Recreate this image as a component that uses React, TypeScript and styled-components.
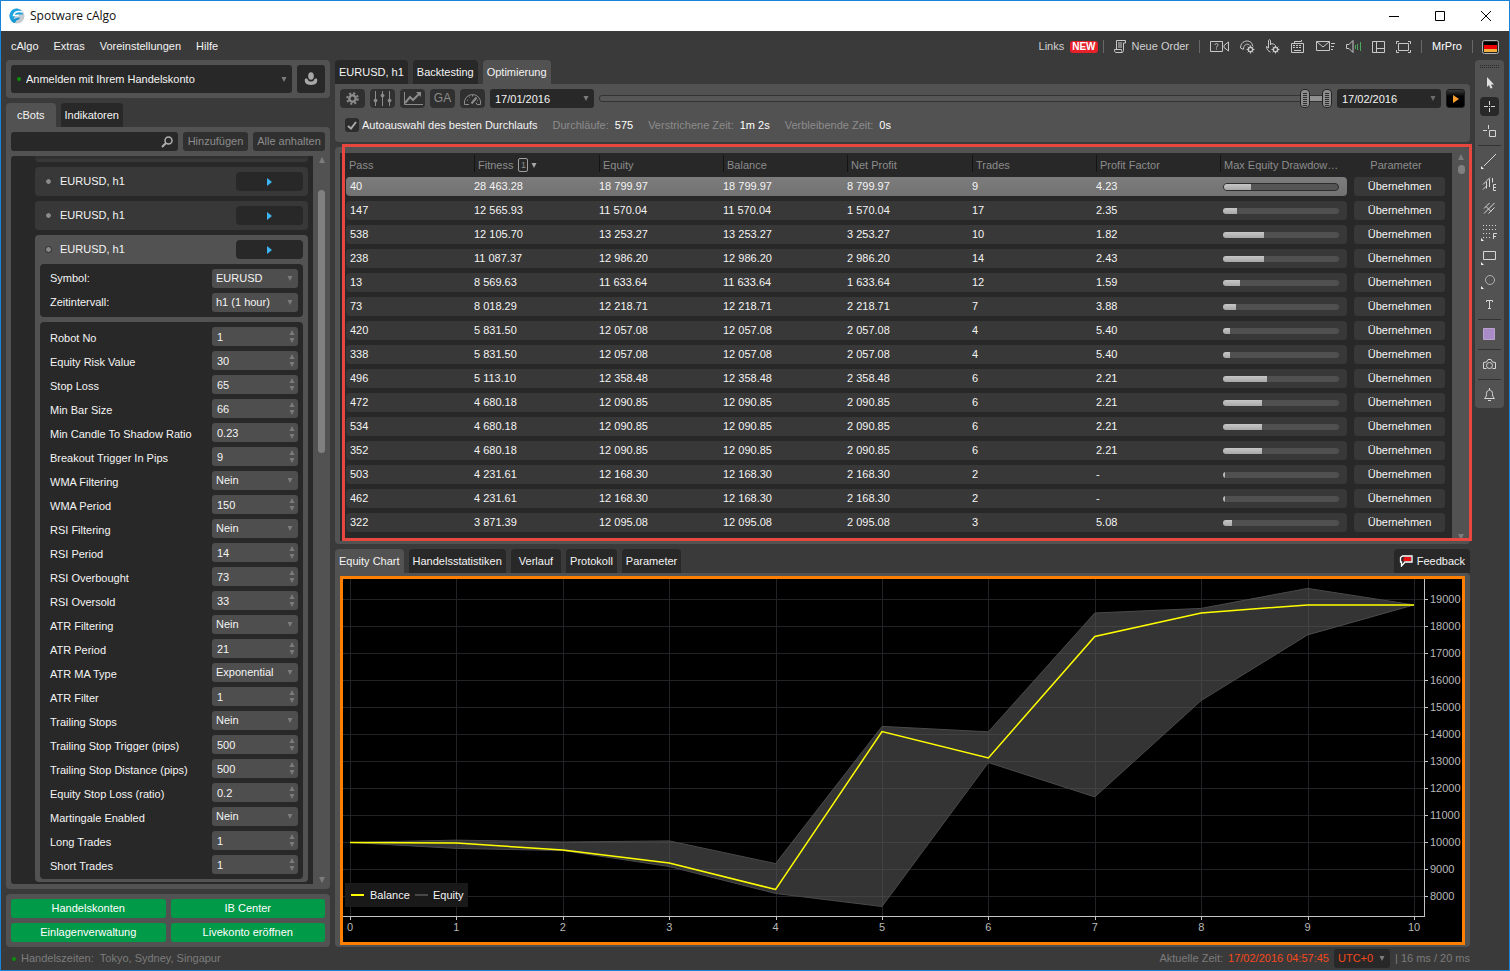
import React from "react";
import styled, { createGlobalStyle, css } from "styled-components";

const c = {
  edge: "#1883d7",
  base: "#3a3a3a",
  panel: "#525252",
  dark: "#282828",
  row: "#383838",
  field: "#4e4e4e",
  text: "#f4f4f4",
  muted: "#8c8c8c",
  icon: "#c8c8c8",
  green: "#009a49",
};

const GlobalStyle = createGlobalStyle`
  * { box-sizing: border-box; }
  body { margin: 0; background: ${c.base}; }
  body, button, input, select, table {
    font-family: "Liberation Sans", Arial, sans-serif;
    font-size: 11px;
    line-height: 13px;
    color: ${c.text};
  }
  button, input, select { border: 0; margin: 0; padding: 0; outline: 0; appearance: none; background: none; }
  svg { display: block; flex: none; }
`;

/* ---------- Window frame ---------- */

const Window = styled.div`
  display: flex;
  flex-direction: column;
  min-height: 100vh;
  min-width: 1200px;
  border: 1px solid ${c.edge};
  background: ${c.base};
`;

const TitleBar = styled.header`
  display: flex;
  align-items: center;
  height: 30px;
  padding-left: 8px;
  background: #fff;
`;

const Title = styled.h1`
  flex: 1;
  margin: 0 0 0 5px;
  font: 400 12px/16px "Open Sans", "Noto Sans", sans-serif;
  color: #111;
`;

const CaptionButton = styled.button`
  display: grid;
  place-items: center;
  width: 46px;
  height: 30px;
`;

const MenuBar = styled.nav`
  display: flex;
  align-items: center;
  height: 29px;
  padding: 2px 10px 0 10px;
`;

const Menu = styled.div`
  display: flex;
  flex: 1;
  gap: 15px;
`;

const MenuButton = styled.button<{ $strong?: boolean }>`
  color: ${(p) => (p.$strong ? "#fff" : c.text)};
`;

const Badge = styled.span`
  margin-left: 6px;
  padding: 0 2px;
  border-radius: 3px;
  background: #e8202a;
  color: #fff;
  font-weight: 700;
  font-size: 10px;
  line-height: 12px;
`;

const ToolLink = styled.a`
  display: flex;
  align-items: center;
  gap: 6px;
  color: #d0d0d0;
  text-decoration: none;
`;

const Divider = styled.span<{ $before?: number; $after?: number }>`
  width: 1px;
  height: 13px;
  margin-left: ${(p) => p.$before ?? 5}px;
  margin-right: ${(p) => p.$after ?? 10}px;
  background: #686868;
`;

const IconSet = styled.div`
  display: flex;
  align-items: center;
  gap: 11px;
`;

const IconButton = styled.button`
  display: block;
`;

/* ---------- Page structure ---------- */

const Body = styled.main`
  display: flex;
  flex: 1;
  align-items: stretch;
  gap: 5px;
  padding: 0 5px;
`;

const Column = styled.div<{ $width?: number }>`
  display: flex;
  flex-direction: column;
  gap: 5px;
  min-width: 0;
  ${(p) => (p.$width ? css`flex: none; width: ${p.$width}px;` : css`flex: 1;`)}
`;

const Section = styled.section<{ $grow?: boolean }>`
  display: flex;
  flex-direction: column;
  ${(p) => p.$grow && css`flex: 1;`}
`;

const Panel = styled.div`
  border-radius: 4px;
  background: ${c.panel};
`;

const TabStrip = styled.div`
  display: flex;
  gap: 5px;
  height: 24px;
`;

const Tab = styled.button<{ $active?: boolean; $pad?: number }>`
  padding: 0 ${(p) => p.$pad ?? 4}px;
  border-radius: 4px 4px 0 0;
  background: ${(p) => (p.$active ? c.panel : c.dark)};
  color: ${c.text};
`;

const FeedbackTab = styled(Tab)`
  display: flex;
  align-items: center;
  gap: 4px;
  margin-left: auto;
`;

/* ---------- Shared controls ---------- */

const Picker = styled.div<{ $tone?: string; $height?: number; $width?: number; $grow?: boolean }>`
  display: grid;
  align-items: center;
  height: ${(p) => p.$height ?? 19}px;
  border-radius: 3px;
  background: ${(p) => p.$tone ?? c.dark};
  ${(p) => (p.$grow ? css`flex: 1;` : css`flex: none; width: ${p.$width}px;`)}
  > * { grid-area: 1 / 1; }
  > svg { justify-self: end; margin-right: 5px; pointer-events: none; }
`;

const PickerSelect = styled.select<{ $pad?: number; $color?: string }>`
  width: 100%;
  height: 100%;
  padding-left: ${(p) => p.$pad ?? 4}px;
  color: ${(p) => p.$color ?? c.text};
`;

const PickerInput = styled.input`
  width: 100%;
  height: 100%;
  padding-left: 5px;
`;

const Spinner = styled.div`
  display: grid;
  align-items: center;
  flex: none;
  width: 86px;
  height: 19px;
  border-radius: 3px;
  background: ${c.field};
  > * { grid-area: 1 / 1; }
  > svg { justify-self: end; margin-right: 3px; pointer-events: none; }
`;

const Down = ({ color = "#7c7c7c" }: { color?: string }) => (
  <svg width="6" height="5" viewBox="0 0 6 5" aria-hidden="true">
    <path d="M.5 0h5L3 5z" fill={color} />
  </svg>
);

/* ---------- Left column ---------- */

const AccountBar = styled(Panel)`
  display: flex;
  gap: 5px;
  padding: 5px;
`;

const StatusDot = styled.span`
  width: 4px;
  height: 4px;
  margin-left: 6px;
  border-radius: 2px;
  background: #0a900a;
`;

const AccountButton = styled.button`
  display: grid;
  place-items: center;
  width: 28px;
  height: 28px;
  border-radius: 3px;
  background: ${c.dark};
`;

const BotPanel = styled(Panel)`
  display: flex;
  flex-direction: column;
  flex: 1;
  gap: 5px;
  padding: 5px 0 5px 5px;
  border-top-left-radius: 0;
`;

const SearchRow = styled.div`
  display: flex;
  gap: 5px;
  margin-right: 5px;
`;

const MutedButton = styled.button<{ $width: number }>`
  flex: none;
  width: ${(p) => p.$width}px;
  height: 19px;
  border-radius: 3px;
  background: #303030;
  color: ${c.muted};
`;

const ListRow = styled.div`
  display: flex;
  flex: 1;
`;

const BotList = styled.div`
  display: flex;
  flex: 1;
  flex-direction: column;
  gap: 5px;
  padding: 0 5px 2px 24px;
  border-radius: 3px 0 0 3px;
  background: ${c.dark};
`;

const BotStub = styled.div`
  height: 6px;
  border-radius: 0 0 4px 4px;
  border-top: 3px solid #303030;
  background: ${c.row};
`;

const BotItem = styled.div<{ $open?: boolean }>`
  display: flex;
  flex-direction: column;
  padding: ${(p) => (p.$open ? "0 5px 3px" : "0 5px")};
  border-radius: 4px;
  background: ${(p) => (p.$open ? c.panel : c.row)};
`;

const BotHeader = styled.div`
  display: flex;
  align-items: center;
  gap: 8px;
  height: 29px;
  padding-left: 5px;
`;

const BotDot = styled.span`
  width: 7px;
  height: 7px;
  border: 1px solid #2a2a2a;
  border-radius: 4px;
  background: #8a8a8a;
`;

const BotName = styled.span`
  flex: 1;
`;

const RunButton = styled.button`
  display: grid;
  place-items: center;
  width: 67px;
  height: 19px;
  border-radius: 4px;
  background: ${c.dark};
`;

const FieldBox = styled.div`
  display: flex;
  flex-direction: column;
  gap: 5px;
  padding: 5px 5px 5px 10px;
  border-radius: 4px;
  background: ${c.dark};
  & + & { margin-top: 5px; }
`;

const Field = styled.label`
  display: flex;
  align-items: center;
  height: 19px;
`;

const FieldName = styled.span<{ $drop?: boolean }>`
  flex: 1;
  padding-top: ${(p) => (p.$drop ? 4 : 0)}px;
`;

const Scrollbar = styled.div<{ $width: number }>`
  display: flex;
  flex: none;
  flex-direction: column;
  align-items: center;
  width: ${(p) => p.$width}px;
  background: ${c.panel};
  > :last-child { margin-top: auto; }
`;

const Thumb = styled.span<{ $gap: number; $height: number }>`
  width: 7px;
  height: ${(p) => p.$height}px;
  margin-top: ${(p) => p.$gap}px;
  border-radius: 4px;
  background: #808080;
`;

const ActionGrid = styled(Panel)`
  display: grid;
  grid-template-columns: 1fr 1fr;
  gap: 5px;
  padding: 5px;
`;

const ActionButton = styled.button`
  height: 19px;
  border-radius: 3px;
  background: ${c.green};
  color: #fff;
`;

/* ---------- Optimisation toolbar ---------- */

const OptPanel = styled(Panel)`
  height: 58px;
  padding: 5px;
  border-top-left-radius: 0;
`;

const OptRow = styled.div`
  display: flex;
  align-items: center;
  gap: 5px;
`;

const OptButton = styled.button`
  display: grid;
  place-items: center;
  width: 25px;
  height: 19px;
  border-radius: 4px;
  background: #303030;
`;

const MutedLabel = styled.span`
  color: ${c.muted};
  font-size: 12px;
`;

const PlayButton = styled.button`
  display: grid;
  place-items: center;
  width: 19px;
  height: 19px;
  border: 1px solid #1c1c1c;
  border-radius: 3px;
  background: linear-gradient(#3a3a3a, #000 40%);
`;

const RangeBox = styled.div`
  display: grid;
  flex: 1;
  align-items: center;
  height: 19px;
  > * { grid-area: 1 / 1; }
`;

const RangeTrack = styled.span`
  height: 7px;
  border: 1px solid #333;
  border-radius: 3px;
  background: #565656;
`;

const RangeFill = styled.span`
  justify-self: end;
  width: 24px;
  height: 5px;
  margin-right: 5px;
  background: #909090;
`;

const RangeInput = styled.input`
  width: 100%;
  height: 19px;
  pointer-events: none;
  &::-webkit-slider-thumb {
    appearance: none;
    pointer-events: auto;
    width: 10px;
    height: 19px;
    border: 1px solid #242424;
    border-radius: 4px;
    background:
      repeating-linear-gradient(transparent 0 1px, #2c2c2c 1px 2px) center / 4px 14px no-repeat,
      #8c8c8c;
  }
`;

const StatsRow = styled.div`
  display: flex;
  align-items: center;
  gap: 15px;
  margin-top: 10px;
  padding-left: 5px;
`;

const CheckLabel = styled.label`
  display: flex;
  align-items: center;
  gap: 3px;
`;

const CheckBox = styled.input`
  width: 14px;
  height: 14px;
  border-radius: 3px;
  background: #2c2c2c;
`;

const CheckWrap = styled.span`
  display: grid;
  place-items: center;
  > * { grid-area: 1 / 1; }
  > svg { pointer-events: none; }
`;

const Stat = styled.span`
  color: ${c.muted};
  b { margin-left: 6px; font-weight: 400; color: #fff; }
`;

/* ---------- Result table ---------- */

const TablePanel = styled(Panel)`
  position: relative;
  display: flex;
  padding: 6px 0 3px 5px;
`;

const Marker = styled.div`
  position: absolute;
  inset: -3px -2px 3px 7px;
  border: 3px solid #e8473f;
  pointer-events: none;
`;

const TableArea = styled.div`
  flex: 1;
  min-width: 0;
  padding: 0 0 4px 6px;
  overflow: hidden;
  background: ${c.dark};
`;

const Table = styled.table`
  width: 100%;
  margin-top: -3px;
  table-layout: fixed;
  border-spacing: 0 5px;
`;

const Th = styled.th`
  height: 17px;
  padding: 3px 0 0 3px;
  border-left: 1px solid #141414;
  color: ${c.muted};
  font-weight: 400;
  text-align: left;
  white-space: nowrap;
  overflow: hidden;
  &:first-child { border-left: 0; }
  &:last-child { padding-left: 0; padding-right: 7px; border-left: 0; text-align: center; }
`;

const SortHeader = styled.span`
  display: flex;
  align-items: center;
  gap: 3px;
`;

const SortOrder = styled.span`
  display: grid;
  place-items: center;
  width: 10px;
  height: 14px;
  margin-left: 2px;
  border: 1px solid #a0a0a0;
  border-radius: 2px;
  font-size: 9px;
  line-height: 9px;
`;

const Tr = styled.tr<{ $selected?: boolean }>`
  td { background: ${(p) => (p.$selected ? "linear-gradient(#7c7c7c, #727272)" : c.row)}; }
  td:first-child { padding-left: 4px; border-radius: 4px 0 0 4px; }
  td:nth-last-child(2) { border-radius: 0 4px 4px 0; }
  td:last-child { padding: 0 7px; background: none; }
`;

const Td = styled.td`
  height: 19px;
  padding: 0;
`;

const Bar = styled.div<{ $selected?: boolean }>`
  width: 116px;
  height: ${(p) => (p.$selected ? 8 : 6)}px;
  margin-left: 3px;
  border: ${(p) => (p.$selected ? "1px solid #2e2e2e" : "0")};
  border-radius: 4px;
  background: ${(p) => (p.$selected ? "#555" : "#505050")};
  overflow: hidden;
`;

const BarFill = styled.div`
  height: 100%;
  background: linear-gradient(#c6c6c6, #a8a8a8);
`;

const ApplyButton = styled.button`
  display: block;
  width: 100%;
  height: 19px;
  border-radius: 3px;
  background: ${c.row};
`;

/* ---------- Chart ---------- */

const ChartPanel = styled(Panel)`
  flex: 1;
  padding: 3px 5px 2px;
  border-top-left-radius: 0;
`;

const ChartFrame = styled.figure`
  margin: 0;
  border: 3px solid #ff8000;
  background: #000;
  svg { width: 100%; height: auto; }
  text { font-family: "Liberation Sans", Arial, sans-serif; font-size: 11px; }
`;

/* ---------- Drawing rail ---------- */

const Rail = styled.aside`
  display: flex;
  flex: none;
  flex-direction: column;
  align-self: flex-start;
  align-items: center;
  gap: 5px;
  width: 29px;
  padding: 5px 0 4px;
  border-radius: 4px;
  background: ${c.panel};
`;

const RailButton = styled.button<{ $active?: boolean }>`
  width: 19px;
  height: 19px;
  border-radius: 4px;
  background: ${(p) => (p.$active ? c.dark : "none")};
`;

const RailLine = styled.span`
  width: 23px;
  height: 1px;
  background: #333;
`;

/* ---------- Status bar ---------- */

const StatusBar = styled.footer`
  display: flex;
  align-items: center;
  gap: 5px;
  height: 23px;
  padding: 0 39px 0 5px;
  color: #7c7c7c;
`;

const Sessions = styled.span`
  flex: 1;
  span { margin-left: 6px; }
`;

const Clock = styled.time`
  color: #f4491c;
`;

/* ---------- Data ---------- */

type Param = [name: string, value: string, kind?: "list"];

const params: Param[] = [
  ["Robot No", "1"],
  ["Equity Risk Value", "30"],
  ["Stop Loss", "65"],
  ["Min Bar Size", "66"],
  ["Min Candle To Shadow Ratio", "0.23"],
  ["Breakout Trigger In Pips", "9"],
  ["WMA Filtering", "Nein", "list"],
  ["WMA Period", "150"],
  ["RSI Filtering", "Nein", "list"],
  ["RSI Period", "14"],
  ["RSI Overbought", "73"],
  ["RSI Oversold", "33"],
  ["ATR Filtering", "Nein", "list"],
  ["ATR Period", "21"],
  ["ATR MA Type", "Exponential", "list"],
  ["ATR Filter", "1"],
  ["Trailing Stops", "Nein", "list"],
  ["Trailing Stop Trigger (pips)", "500"],
  ["Trailing Stop Distance (pips)", "500"],
  ["Equity Stop Loss (ratio)", "0.2"],
  ["Martingale Enabled", "Nein", "list"],
  ["Long Trades", "1"],
  ["Short Trades", "1"],
];

type Pass = [pass: string, fitness: string, equity: string, profit: string, trades: string, factor: string, drawdown: number];

const passes: Pass[] = [
  ["40", "28 463.28", "18 799.97", "8 799.97", "9", "4.23", 24],
  ["147", "12 565.93", "11 570.04", "1 570.04", "17", "2.35", 12],
  ["538", "12 105.70", "13 253.27", "3 253.27", "10", "1.82", 35],
  ["238", "11 087.37", "12 986.20", "2 986.20", "14", "2.43", 35],
  ["13", "8 569.63", "11 633.64", "1 633.64", "12", "1.59", 15],
  ["73", "8 018.29", "12 218.71", "2 218.71", "7", "3.88", 11],
  ["420", "5 831.50", "12 057.08", "2 057.08", "4", "5.40", 6],
  ["338", "5 831.50", "12 057.08", "2 057.08", "4", "5.40", 6],
  ["496", "5 113.10", "12 358.48", "2 358.48", "6", "2.21", 38],
  ["472", "4 680.18", "12 090.85", "2 090.85", "6", "2.21", 34],
  ["534", "4 680.18", "12 090.85", "2 090.85", "6", "2.21", 34],
  ["352", "4 680.18", "12 090.85", "2 090.85", "6", "2.21", 34],
  ["503", "4 231.61", "12 168.30", "2 168.30", "2", "-", 2],
  ["462", "4 231.61", "12 168.30", "2 168.30", "2", "-", 2],
  ["322", "3 871.39", "12 095.08", "2 095.08", "3", "5.08", 8],
];

const columnWidths = [128, 125, 124, 124, 125, 124, 124, 127, 105];

const balance = [10000, 9980, 9720, 9240, 8260, 14110, 13130, 17630, 18500, 18800, 18800];
const equityHigh = [10000, 10090, 10020, 10060, 9220, 14300, 14100, 18500, 18670, 19410, 18800];
const equityLow = [10000, 9780, 9700, 9110, 8110, 7630, 12960, 11690, 15260, 17690, 18800];

const chartX = (trade: number) => 7 + trade * 106.4;
const chartY = (price: number) => 317.5 - ((price - 8000) * 27) / 1000;
const points = (series: number[]) => series.map((v, i) => `${chartX(i).toFixed(1)},${chartY(v).toFixed(1)}`);

/* ---------- Icons ---------- */

const Logo = () => (
  <svg width="16" height="16" viewBox="0 0 16 16" aria-hidden="true">
    <circle cx="8" cy="8" r="7.500" fill="#c4ccd2" />
    <path d="M8 .5A7.500 7.500 0 0 0 2 12.500h2c1-3 2-5 5-6h5A7.500 7.500 0 0 0 8 .5z" fill="#1ba4e0" />
    <path d="M13.500 4C9 3 5.500 4 4.500 7.500h5" fill="none" stroke="#fff" strokeWidth="1.500" />
    <path d="M2 12.500c2-1 5-3 9-3l-1 2c-2 0-3 1-4 3.500-2 0-3-1-4-2.500z" fill="#1495d4" />
  </svg>
);

const Stroke = ({ w, h = 15, children, label }: { w: number; h?: number; children: React.ReactNode; label: string }) => (
  <IconButton aria-label={label}>
    <svg width={w} height={h} viewBox={`0 0 ${w} ${h}`} fill="none" stroke={c.icon}>
      {children}
    </svg>
  </IconButton>
);

const cog = (x: number, y: number) => (
  <g transform={`translate(${x} ${y})`}>
    <circle r="2.200" strokeWidth="1.400" />
    <path d="M0-4v1.500M0 4V2.500M-4 0h1.500M4 0H2.500M-2.800-2.800l1 1M2.800 2.800l-1-1M2.800-2.800l-1 1M-2.800 2.800l1-1" />
  </g>
);

const RailIcon = ({ children, label, active }: { children: React.ReactNode; label: string; active?: boolean }) => (
  <RailButton $active={active} aria-label={label}>
    <svg width="19" height="19" viewBox="0 0 19 19" fill="none" stroke="#d6d6d6">
      {children}
    </svg>
  </RailButton>
);

const corner = <path d="M1 15v3h3z" fill="#eee" stroke="none" />;

const dotRow = (y: number, from: number, to: number) => <path key={y} d={`M${from} ${y + 0.5}H${to}`} strokeDasharray="1 2" />;

/* ---------- Parts ---------- */

const BotRow = () => (
  <BotHeader>
    <BotDot />
    <BotName>EURUSD, h1</BotName>
    <RunButton aria-label="Start">
      <svg width="5" height="8" viewBox="0 0 5 8"><path d="M0 0l5 4-5 4z" fill="#3db4f5" /></svg>
    </RunButton>
  </BotHeader>
);

const ParamField = ({ param: [name, value, kind] }: { param: Param }) => (
  <Field>
    <FieldName $drop>{name}</FieldName>
    {kind === "list" ? (
      <Picker $tone={c.field} $width={86}>
        <PickerSelect defaultValue={value}><option>{value}</option></PickerSelect>
        <Down />
      </Picker>
    ) : (
      <Spinner>
        <PickerInput defaultValue={value} />
        <svg width="6" height="13" viewBox="0 0 6 13"><path d="M3 0l2.500 5h-5zM3 13l2.500-5h-5z" fill="#7a7a7a" /></svg>
      </Spinner>
    )}
  </Field>
);

const ScrollArrow = ({ down }: { down?: boolean }) => (
  <svg width="8" height="7" viewBox="0 0 8 7" aria-hidden="true">
    <path d={down ? "M1 0h6L4 6z" : "M4 1l3 6H1z"} fill="#7c7c7c" />
  </svg>
);

const Sidebar = () => (
  <Column $width={324}>
    <AccountBar>
      <Picker $height={28} $grow>
        <StatusDot />
        <PickerSelect $pad={15} aria-label="Handelskonto">
          <option>Anmelden mit Ihrem Handelskonto</option>
        </PickerSelect>
        <Down />
      </Picker>
      <AccountButton aria-label="Konto">
        <svg width="14" height="14" viewBox="0 0 14 14" fill="#a8a8a8">
          <ellipse cx="7" cy="4" rx="2.800" ry="3.800" />
          <path d="M1 7c1-1 3 0 3 1 1 2 5 2 6 0 0-1 2-2 3-1 1 3-1 6-6 6s-7-3-6-6z" />
        </svg>
      </AccountButton>
    </AccountBar>

    <Section $grow>
      <TabStrip>
        <Tab $active $pad={11}>cBots</Tab>
        <Tab>Indikatoren</Tab>
      </TabStrip>
      <BotPanel>
        <SearchRow>
          <Picker $grow>
            <PickerInput aria-label="Suchen" />
            <svg width="12" height="12" viewBox="0 0 12 12" fill="none" stroke="#b0b0b0">
              <circle cx="7.500" cy="4.500" r="3.500" strokeWidth="1.500" />
              <path d="M5 7l-4 4" strokeWidth="2" />
            </svg>
          </Picker>
          <MutedButton $width={65}>Hinzufügen</MutedButton>
          <MutedButton $width={72}>Alle anhalten</MutedButton>
        </SearchRow>
        <ListRow>
          <BotList>
            <BotStub />
            <BotItem><BotRow /></BotItem>
            <BotItem><BotRow /></BotItem>
            <BotItem $open>
              <BotRow />
              <FieldBox>
                <Field>
                  <FieldName>Symbol:</FieldName>
                  <Picker $tone={c.field} $width={86}>
                    <PickerSelect><option>EURUSD</option></PickerSelect>
                    <Down />
                  </Picker>
                </Field>
                <Field>
                  <FieldName>Zeitintervall:</FieldName>
                  <Picker $tone={c.field} $width={86}>
                    <PickerSelect><option>h1 (1 hour)</option></PickerSelect>
                    <Down />
                  </Picker>
                </Field>
              </FieldBox>
              <FieldBox>
                {params.map((p) => <ParamField key={p[0]} param={p} />)}
              </FieldBox>
            </BotItem>
          </BotList>
          <Scrollbar $width={17}>
            <ScrollArrow />
            <Thumb $gap={27} $height={263} />
            <ScrollArrow down />
          </Scrollbar>
        </ListRow>
      </BotPanel>
    </Section>

    <ActionGrid>
      <ActionButton>Handelskonten</ActionButton>
      <ActionButton>IB Center</ActionButton>
      <ActionButton>Einlagenverwaltung</ActionButton>
      <ActionButton>Livekonto eröffnen</ActionButton>
    </ActionGrid>
  </Column>
);

const Toolbar = () => (
  <Section>
    <TabStrip>
      <Tab>EURUSD, h1</Tab>
      <Tab>Backtesting</Tab>
      <Tab $active>Optimierung</Tab>
    </TabStrip>
    <OptPanel>
      <OptRow>
        <OptButton aria-label="Einstellungen">
          <svg width="13" height="13" viewBox="-6.500 -6.500 13 13" fill="none" stroke="#8c8c8c">
            <circle r="3.200" strokeWidth="2.400" />
            <circle r="5.300" strokeWidth="2" strokeDasharray="2.100 2.060" />
          </svg>
        </OptButton>
        <OptButton aria-label="Parameter">
          <svg width="19" height="15" viewBox="0 0 19 15" stroke="#8c8c8c" fill="#8c8c8c">
            <path d="M2.500 0v15M9.500 0v15M16.500 0v15" />
            <circle cx="2.500" cy="9.500" r="1.500" /><circle cx="9.500" cy="4.500" r="1.500" /><circle cx="16.500" cy="9.500" r="1.500" />
          </svg>
        </OptButton>
        <OptButton aria-label="Diagramm">
          <svg width="20" height="14" viewBox="0 0 20 14" stroke="#8c8c8c" fill="none">
            <path d="M1.500 0v12.500H20" />
            <path d="M2 11l5-6 3 3 6-6" strokeWidth="2" />
            <path d="M13 0h5v5z" fill="#8c8c8c" stroke="none" />
          </svg>
        </OptButton>
        <OptButton aria-label="Genetischer Algorithmus">
          <MutedLabel>GA</MutedLabel>
        </OptButton>
        <OptButton aria-label="Leistung">
          <svg width="19" height="13" viewBox="0 0 19 13" stroke="#8c8c8c" fill="none">
            <path d="M1.500 12.500a8.200 8.200 0 1 1 16 0h-3.500l-1-2M1.500 12.500H6" />
            <path d="M4 8l1 .5M6 4.500l.5 1M9.500 3v1.500M15 8l-1 .5" />
            <path d="M8.500 11.500l5-6" strokeWidth="2" />
          </svg>
        </OptButton>
        <Picker $width={104}>
          <PickerInput defaultValue="17/01/2016" aria-label="Von" />
          <Down />
        </Picker>
        <RangeBox>
          <RangeTrack />
          <RangeFill />
          <RangeInput type="range" min={0} max={723} defaultValue={701} aria-label="Startdatum" />
          <RangeInput type="range" min={0} max={723} defaultValue={723} aria-label="Enddatum" />
        </RangeBox>
        <Picker $width={104}>
          <PickerInput defaultValue="17/02/2016" aria-label="Bis" />
          <Down color="#6c6c6c" />
        </Picker>
        <PlayButton aria-label="Optimierung starten">
          <svg width="6" height="8" viewBox="0 0 6 8"><path d="M0 0l6 4-6 4z" fill="#ffa02c" /></svg>
        </PlayButton>
      </OptRow>
      <StatsRow>
        <CheckLabel>
          <CheckWrap>
            <CheckBox type="checkbox" defaultChecked />
            <svg width="10" height="9" viewBox="0 0 10 9" fill="none" stroke="#a8a8a8" strokeWidth="2"><path d="M1 5l3 2.500L9 1" /></svg>
          </CheckWrap>
          Autoauswahl des besten Durchlaufs
        </CheckLabel>
        <Stat>Durchläufe:<b>575</b></Stat>
        <Stat>Verstrichene Zeit:<b>1m 2s</b></Stat>
        <Stat>Verbleibende Zeit:<b>0s</b></Stat>
      </StatsRow>
    </OptPanel>
  </Section>
);

const Results = () => (
  <TablePanel>
    <TableArea>
      <Table>
        <colgroup>{columnWidths.map((w, i) => <col key={i} width={w} />)}</colgroup>
        <thead>
          <tr>
            <Th>Pass</Th>
            <Th><SortHeader>Fitness <SortOrder>1</SortOrder><Down color="#a8a8a8" /></SortHeader></Th>
            <Th>Equity</Th>
            <Th>Balance</Th>
            <Th>Net Profit</Th>
            <Th>Trades</Th>
            <Th>Profit Factor</Th>
            <Th>Max Equity Drawdow…</Th>
            <Th>Parameter</Th>
          </tr>
        </thead>
        <tbody>
          {passes.map(([pass, fitness, equity, profit, trades, factor, drawdown], i) => (
            <Tr key={pass} $selected={i === 0}>
              <Td>{pass}</Td>
              <Td>{fitness}</Td>
              <Td>{equity}</Td>
              <Td>{equity}</Td>
              <Td>{profit}</Td>
              <Td>{trades}</Td>
              <Td>{factor}</Td>
              <Td><Bar $selected={i === 0}><BarFill style={{ width: `${drawdown}%` }} /></Bar></Td>
              <Td><ApplyButton>Übernehmen</ApplyButton></Td>
            </Tr>
          ))}
        </tbody>
      </Table>
    </TableArea>
    <Scrollbar $width={18}>
      <ScrollArrow />
      <Thumb $gap={5} $height={9} />
      <ScrollArrow down />
    </Scrollbar>
    <Marker />
  </TablePanel>
);

const EquityChart = () => {
  const trades = balance.map((_, i) => i);
  const prices = Array.from({ length: 12 }, (_, i) => 8000 + i * 1000);
  return (
    <ChartFrame>
      <svg viewBox="0 0 1119 363" role="img" aria-label="Equity Chart">
        <g stroke="#222326">
          {prices.map((p) => <path key={p} d={`M0 ${chartY(p)}H1081`} />)}
          {trades.map((t) => <path key={t} d={`M${Math.round(chartX(t)) + 0.5} 0V337`} />)}
        </g>
        <polygon points={[...points(equityHigh), ...points(equityLow).reverse()].join(" ")} fill="#5a5a5a" fillOpacity="0.580" stroke="#4a4a4a" />
        <polyline points={points(balance).join(" ")} fill="none" stroke="#ffff00" strokeWidth="1.500" />
        <path d="M0 337.500H1081.500M1081.500 0V338" stroke="#c4c4c4" fill="none" />
        <g fill="#b8b8b8">
          {prices.map((p) => (
            <g key={p}>
              <path d={`M1082 ${chartY(p)}h3`} stroke="#c4c4c4" />
              <text x="1087" y={chartY(p) + 3.5}>{p}</text>
            </g>
          ))}
          {trades.map((t) => (
            <g key={t}>
              <path d={`M${Math.round(chartX(t)) + 0.5} 338v3`} stroke="#c4c4c4" />
              <text x={chartX(t)} y="352" textAnchor="middle">{t}</text>
            </g>
          ))}
        </g>
        <rect x="2" y="304" width="123" height="24" fill="#191919" />
        <path d="M8 316h13" stroke="#ffff00" strokeWidth="2" />
        <text x="27" y="320" fill="#f4f4f4">Balance</text>
        <path d="M72 316h13" stroke="#484848" strokeWidth="2" />
        <text x="90" y="320" fill="#f4f4f4">Equity</text>
      </svg>
    </ChartFrame>
  );
};

const ChartSection = () => (
  <Section $grow>
    <TabStrip>
      <Tab $active>Equity Chart</Tab>
      <Tab>Handelsstatistiken</Tab>
      <Tab $pad={8}>Verlauf</Tab>
      <Tab>Protokoll</Tab>
      <Tab>Parameter</Tab>
      <FeedbackTab $pad={5}>
        <svg width="14" height="12" viewBox="0 0 14 12" fill="none">
          <path d="M3.500 1h9.500v6H6l-3.500 4V7H1.500V2.500z" stroke="#fff" strokeWidth="1.300" />
          <path d="M5 2h7v4H4z" fill="#e81010" />
        </svg>
        Feedback
      </FeedbackTab>
    </TabStrip>
    <ChartPanel><EquityChart /></ChartPanel>
  </Section>
);

const DrawingRail = () => (
  <Rail>
    <svg width="20" height="3" viewBox="0 0 20 3" shapeRendering="crispEdges" stroke="#2c2c2c">
      <path d="M0 .5h20M0 2.500h20" strokeDasharray="1 1" />
    </svg>
    <RailIcon label="Zeiger"><path d="M7 4v10l2-2 1.500 3.500 2-.5-1.500-3.500H14z" fill="#e0e0e0" stroke="none" /></RailIcon>
    <RailIcon label="Fadenkreuz" active><path d="M9.500 4v4M9.500 11v4M4 9.500h4M11 9.500h4M9 9.500h1" /></RailIcon>
    <RailIcon label="Markierung"><path d="M8.500 4v4M3 9.500h4M9.500 9.500h6v6h-6z" /></RailIcon>
    <RailLine />
    <RailIcon label="Trendlinie"><path d="M4 15L16 3" />{corner}</RailIcon>
    <RailIcon label="Äquidistanter Kanal">
      <path d="M3 9.500L10 2.500M3 14.500l4-4M6.500 13.500V7M9.500 12V4M12.500 7.500V3M16 9.500h-2.500v6H16M13.500 12.500H16" />
    </RailIcon>
    <RailIcon label="Pitchfork"><path d="M4 9.500L9.500 4M4 14.500L14.500 4M8.500 14.500l6-6M6 7.500l5 5" /></RailIcon>
    <RailIcon label="Fibonacci">
      {[2, 6, 10, 14].map((y) => dotRow(y, 3, y > 8 ? 11 : 17))}
      <path d="M13.500 16v-5.500H17M13.500 13.500H16" />{corner}
    </RailIcon>
    <RailIcon label="Rechteck"><path d="M3.500 4.500h12v8h-12z" />{corner}</RailIcon>
    <RailIcon label="Ellipse"><circle cx="10" cy="9" r="4.500" stroke="#b0b0b0" />{corner}</RailIcon>
    <RailIcon label="Text"><path d="M6.500 7V5.500h6V7M9.500 5.500v8M8 13.500h3" /></RailIcon>
    <RailLine />
    <RailIcon label="Farbe"><path d="M3.500 3.500h11v11h-11z" fill="#a98bc8" stroke="#b8a2cf" /></RailIcon>
    <RailLine />
    <RailIcon label="Schnappschuss">
      <path d="M6.500 13.500h-3v-6l3-.5 1.500-2.500h3l1.500 2.500 3 .5v6h-3" /><circle cx="9.500" cy="10.500" r="3" />
    </RailIcon>
    <RailLine />
    <RailIcon label="Alarm"><path d="M4.500 13.500c2-2 2-3 2-5 0-4.500 6-4.500 6 0 0 2 0 3 2 5zM8 15.500h3M9.500 3v2" /></RailIcon>
  </Rail>
);

const TopBar = () => (
  <MenuBar>
    <Menu>
      <MenuButton>cAlgo</MenuButton>
      <MenuButton>Extras</MenuButton>
      <MenuButton>Voreinstellungen</MenuButton>
      <MenuButton>Hilfe</MenuButton>
    </Menu>
    <ToolLink href="#links">Links</ToolLink>
    <Badge>NEW</Badge>
    <Divider />
    <ToolLink href="#order">
      <svg width="12" height="13" viewBox="0 0 12 13" fill="none" stroke={c.icon}>
        <path d="M2.500 9V.5h9V3h-2v7.500c0 2-2 2-2 0v-1h-7c0 2 .5 3 1.500 3h6.500M4 3h4M4 5h4M4 7h4" />
      </svg>
      Neue Order
    </ToolLink>
    <Divider $before={10} />
    <IconSet>
      <Stroke w={19} label="Videohilfe">
        <path d="M.5 2.500h12v10H.5zM14 6.500L18.500 3v9L14 8.500z" />
        <path d="M5 6c0-2 3-2 3 0 0 1-1.500 1-1.500 2.500M6.500 9.500v1" />
      </Stroke>
      <Stroke w={15} label="Indikatoren verwalten">
        <path d="M.5 9c0-9 12-9 12-2M3.500 10c0-5 5-6 6-3.500M.5 9l3 1.500" />{cog(10.5, 10.5)}
      </Stroke>
      <Stroke w={14} label="Klick-Handel">
        <path d="M2.500 7V1.500c0-1 2-1 2 0V6M4.500 5c2-.5 4 0 5 1.500M2.500 7v2L.5 7.500c0 3 2 5 4 5.500" />{cog(9.5, 10.5)}
      </Stroke>
      <Stroke w={14} label="Tastenkürzel">
        <path d="M.5 4.500h12v9H.5zM3.500 4V2.500h7V1" />
        <path d="M2 6.500h9M2 8.500h9" strokeDasharray="2 1" /><path d="M3 11.500h7" />
      </Stroke>
      <Stroke w={19} label="E-Mail">
        <path d="M.5 2.500h13v9H.5zM.5 2.500L7 8l6.500-5.500M15 4.500h4M15 7.500h3M15 10.500h2" />
      </Stroke>
      <Stroke w={15} label="Ton">
        <path d="M.5 5.500H3l4-4v12l-4-4H.5z" />
        <path d="M9.500 6v4M11.500 5v6M14.500 3v9" stroke="#4aa85c" />
      </Stroke>
      <Stroke w={13} label="Layout">
        <path d="M.5 2.500h12v11H.5zM4.500 2.500v11M4.500 9.500h8" />
      </Stroke>
      <Stroke w={15} label="Vollbild">
        <path d="M2.500 4.500h10v7h-10zM.5 5V2.500H3M12 2.500h2.500V5M14.500 11v2.500H12M3 13.500H.5V11" />
      </Stroke>
    </IconSet>
    <Divider $before={10} />
    <MenuButton $strong>MrPro</MenuButton>
    <Divider $before={10} $after={9} />
    <IconButton aria-label="Sprache">
      <svg width="17" height="14" viewBox="0 0 17 14">
        <rect x=".5" y=".5" width="16" height="13" rx="2" fill="#222" stroke="#b4b4b4" />
        <rect x="2" y="2" width="13" height="4" fill="#000" />
        <rect x="2" y="5" width="13" height="4" fill="#f00000" />
        <rect x="2" y="9" width="13" height="3" fill="#f0b040" />
      </svg>
    </IconButton>
  </MenuBar>
);

export default function App() {
  return (
    <Window>
      <GlobalStyle />
      <TitleBar>
        <Logo />
        <Title>Spotware cAlgo</Title>
        <CaptionButton aria-label="Minimieren"><svg width="10" height="10"><path d="M0 5.500h10" stroke="#000" /></svg></CaptionButton>
        <CaptionButton aria-label="Maximieren"><svg width="10" height="10"><path d="M.5.500h9v9h-9z" fill="none" stroke="#000" /></svg></CaptionButton>
        <CaptionButton aria-label="Schließen"><svg width="10" height="10"><path d="M0 0l10 10M10 0L0 10" stroke="#000" /></svg></CaptionButton>
      </TitleBar>
      <TopBar />
      <Body>
        <Sidebar />
        <Column>
          <Toolbar />
          <Results />
          <ChartSection />
        </Column>
        <DrawingRail />
      </Body>
      <StatusBar>
        <StatusDot />
        <Sessions>Handelszeiten:<span>Tokyo, Sydney, Singapur</span></Sessions>
        Aktuelle Zeit:
        <Clock>17/02/2016 04:57:45</Clock>
        <Picker $width={56}>
          <PickerSelect $color="#f4491c" aria-label="Zeitzone"><option>UTC+0</option></PickerSelect>
          <Down />
        </Picker>
        <span>| 16 ms / 20 ms</span>
      </StatusBar>
    </Window>
  );
}
